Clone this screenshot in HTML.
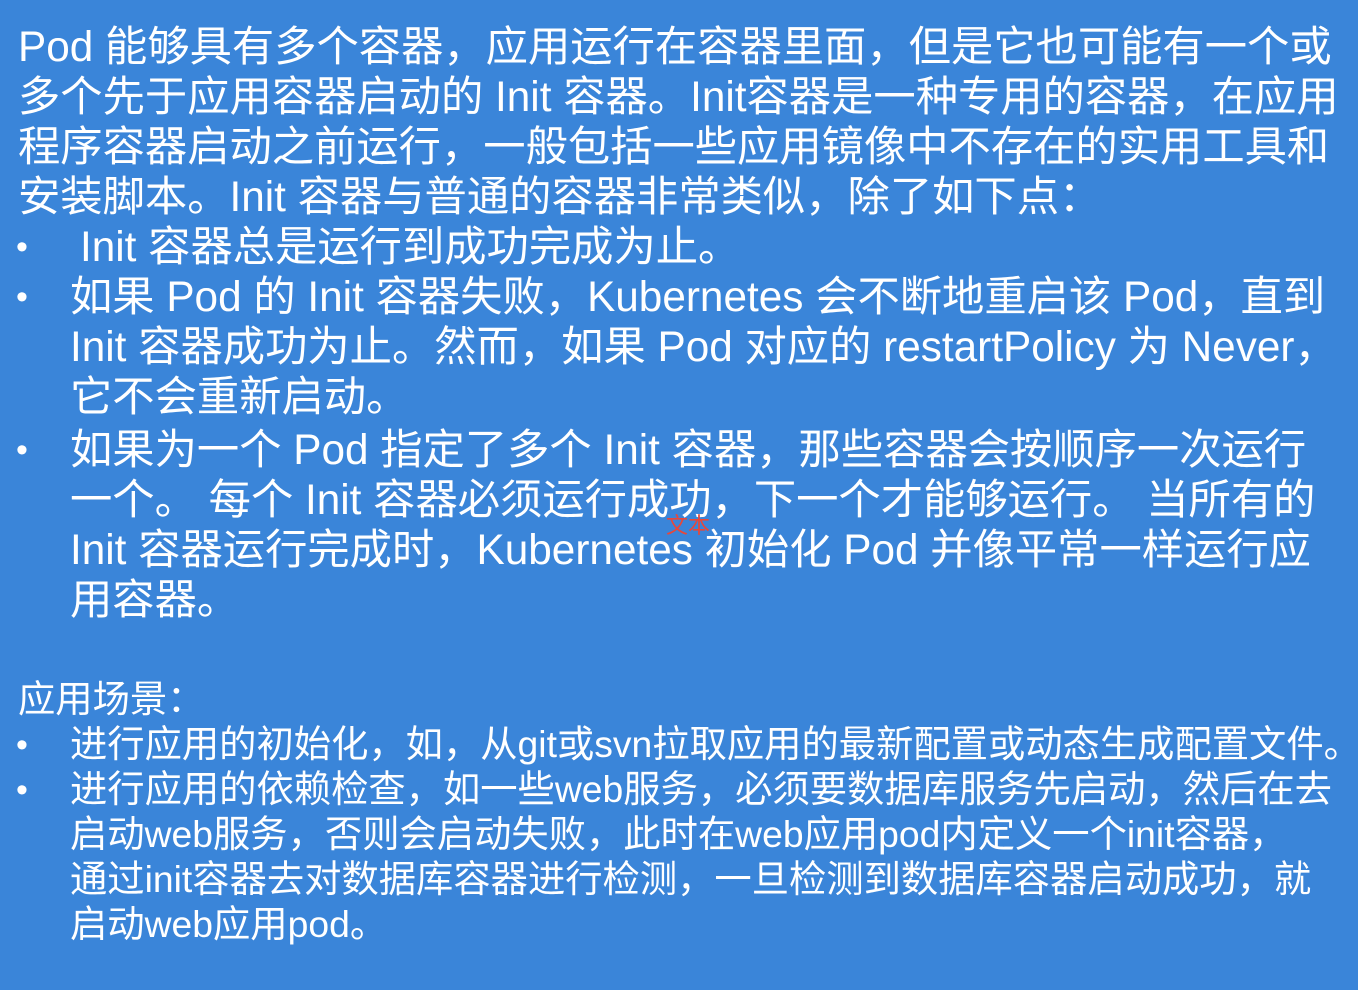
<!DOCTYPE html>
<html><head><meta charset="utf-8"><style>
html,body{margin:0;padding:0}
body{width:1358px;height:990px;background:#3a85d9;position:relative;overflow:hidden;color:#fff;font-family:"Liberation Sans","Noto Sans CJK SC",sans-serif}
.l{position:absolute;white-space:nowrap;font-size:42.3px;line-height:50px}
.s{font-size:37.3px;line-height:45px}
.b{position:absolute;font-size:34px;left:16px}
.red{position:absolute;left:666px;top:511px;color:#e8473a;font-size:22px;line-height:26px;font-family:"Noto Sans CJK SC",sans-serif}
</style></head><body>
<div class="l" style="left:18px;top:22px">Pod 能够具有多个容器，应用运行在容器里面，但是它也可能有一个或</div>
<div class="l" style="left:18px;top:72px">多个先于应用容器启动的 Init 容器。Init容器是一种专用的容器，在应用</div>
<div class="l" style="left:18px;top:122px">程序容器启动之前运行，一般包括一些应用镜像中不存在的实用工具和</div>
<div class="l" style="left:18px;top:172px">安装脚本。Init 容器与普通的容器非常类似，除了如下点：</div>
<div class="l b" style="top:222px">•</div>
<div class="l" style="left:80px;top:222px">Init 容器总是运行到成功完成为止。</div>
<div class="l b" style="top:272px">•</div>
<div class="l" style="left:70px;top:272px">如果 Pod 的 Init 容器失败，Kubernetes 会不断地重启该 Pod，直到</div>
<div class="l" style="left:70px;top:322px">Init 容器成功为止。然而，如果 Pod 对应的 restartPolicy 为 Never，</div>
<div class="l" style="left:70px;top:372px">它不会重新启动。</div>
<div class="l b" style="top:425px">•</div>
<div class="l" style="left:70px;top:425px">如果为一个 Pod 指定了多个 Init 容器，那些容器会按顺序一次运行</div>
<div class="l" style="left:70px;top:475px">一个。 每个 Init 容器必须运行成功，下一个才能够运行。 当所有的</div>
<div class="l" style="left:70px;top:525px">Init 容器运行完成时，Kubernetes 初始化 Pod 并像平常一样运行应</div>
<div class="l" style="left:70px;top:575px">用容器。</div>
<div class="red">文本</div>
<div class="l s" style="left:18px;top:677px">应用场景：</div>
<div class="l b" style="top:720px">•</div>
<div class="l s" style="left:70px;top:722px">进行应用的初始化，如，从git或svn拉取应用的最新配置或动态生成配置文件。</div>
<div class="l b" style="top:765px">•</div>
<div class="l s" style="left:70px;top:767px">进行应用的依赖检查，如一些web服务，必须要数据库服务先启动，然后在去</div>
<div class="l s" style="left:70px;top:812px">启动web服务，否则会启动失败，此时在web应用pod内定义一个init容器，</div>
<div class="l s" style="left:70px;top:857px">通过init容器去对数据库容器进行检测，一旦检测到数据库容器启动成功，就</div>
<div class="l s" style="left:70px;top:902px">启动web应用pod。</div>
</body></html>
